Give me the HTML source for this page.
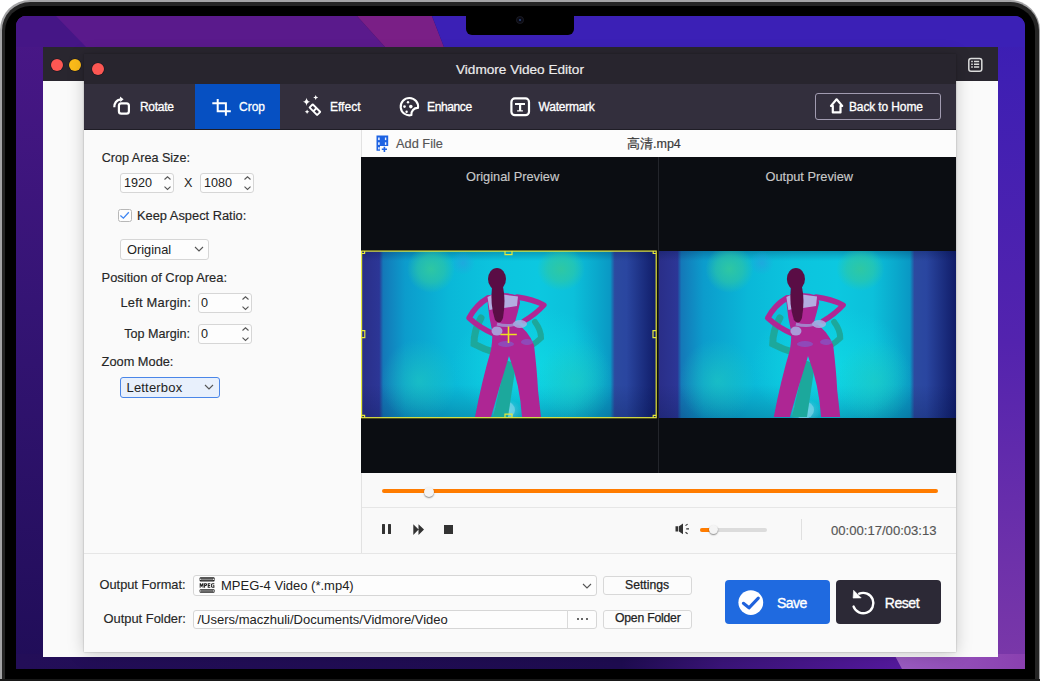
<!DOCTYPE html>
<html><head><meta charset="utf-8">
<style>
*{margin:0;padding:0;box-sizing:border-box}
html,body{width:1040px;height:681px;overflow:hidden;background:#fff;font-family:"Liberation Sans",sans-serif}
.a{position:absolute}
.t{position:absolute;white-space:nowrap;line-height:1}
svg{position:absolute;overflow:visible}
#frame{left:0;top:0;width:1040px;height:720px;border-radius:30px;background:#a4a4a6}
#ring{left:1.5px;top:1.5px;width:1037px;height:720px;border-radius:28.5px;background:#252525}
#bezel{left:5px;top:5.5px;width:1030px;height:720px;border-radius:25px;background:#000}
#screen{left:16px;top:16px;width:1009px;height:653px;border-radius:10px 10px 0 0;overflow:hidden}
#notch{left:466px;top:16px;width:108px;height:19px;background:#000;border-radius:0 0 6px 6px}
#mainwin{left:43px;top:47px;width:955px;height:610px;background:#fafafa}
#maintb{left:43px;top:47px;width:955px;height:34px;background:#29262f}
.dot{position:absolute;width:12px;height:12px;border-radius:50%}
#dialog{left:84px;top:54px;width:872px;height:598px;background:#fafafa;box-shadow:0 0 1.5px rgba(0,0,0,.3),0 2px 16px rgba(0,0,0,.2)}
.lbl{color:#262626;font-size:12.6px;-webkit-text-stroke:.15px #262626}
.spin{position:absolute;width:54px;height:20px;border:1px solid #d6d6d6;border-radius:3px;background:#fdfdfd}
.sel{position:absolute;border:1px solid #d6d6d6;border-radius:3px;background:#fdfdfd}
.btn{position:absolute;border:1px solid #d8d8d8;border-radius:3px;background:#fcfcfc}
</style></head><body>
<div class="a" id="frame"></div>
<div class="a" id="ring"></div>
<div class="a" id="bezel"></div>
<div class="a" id="screen">
<svg width="1009" height="653" viewBox="0 0 1009 653" style="left:0;top:0">
<defs>
<linearGradient id="gl" x1="0" y1="0" x2="0" y2="1"><stop offset="0" stop-color="#4a1788"/><stop offset=".45" stop-color="#341474"/><stop offset="1" stop-color="#200d58"/></linearGradient>
<linearGradient id="gr" x1="0" y1="0" x2="0" y2="1"><stop offset="0" stop-color="#3a1eb4"/><stop offset=".5" stop-color="#5323ae"/><stop offset="1" stop-color="#7b38a8"/></linearGradient>
<linearGradient id="gb" x1="0" y1="0" x2="1" y2="0"><stop offset="0" stop-color="#230e58"/><stop offset=".6" stop-color="#1e0c50"/><stop offset=".7" stop-color="#3a1478"/><stop offset=".86" stop-color="#52189a"/><stop offset="1" stop-color="#6a28a8"/></linearGradient>
<linearGradient id="gb2" x1="0" y1="0" x2="1" y2="0"><stop offset="0" stop-color="#9a5cc0"/><stop offset="1" stop-color="#8a40b0"/></linearGradient>
</defs>
<rect width="1009" height="653" fill="#2a1060"/>
<rect x="0" y="0" width="30" height="653" fill="url(#gl)"/>
<rect x="975" y="0" width="34" height="653" fill="url(#gr)"/>
<polygon points="0,0 341,0 369,31 0,31" fill="#5a1a8c"/>
<polygon points="0,0 40,0 70,31 0,31" fill="#451686"/>
<polygon points="341,0 416,0 428,31 369,31" fill="#7a1f86"/>
<polygon points="416,0 1009,0 1009,31 428,31" fill="#3b20b6"/>
<rect x="0" y="638" width="1009" height="15" fill="url(#gb)"/>
<polygon points="878,638 1009,638 1009,653 886,653" fill="url(#gb2)"/>
</svg>
</div>
<div class="a" id="notch"></div>
<div class="a" style="left:0;top:679px;width:1040px;height:2px;background:#181818"></div>
<div class="a" style="left:517px;top:17px;width:6px;height:6px;border-radius:50%;background:#0a0a14;box-shadow:0 0 0 .8px #1e1e26"></div><div class="a" style="left:519px;top:19px;width:2px;height:2px;border-radius:50%;background:#2a4a80"></div>
<div class="a" id="mainwin"></div>
<div class="a" id="maintb"></div>
<div class="dot" style="left:51px;top:59px;background:#fc5753;box-shadow:0 0 0 .6px #1a1820"></div>
<div class="dot" style="left:69px;top:59px;background:#fdbc19;box-shadow:0 0 0 .6px #1a1820"></div>
<svg width="24" height="24" style="left:963px;top:53px" viewBox="0 0 24 24"><rect x="5.8" y="5.5" width="13" height="12.8" rx="2.3" fill="none" stroke="#dcdcdc" stroke-width="1.5"/><g stroke="#dcdcdc" stroke-width="1.5"><path d="M8.2 8.5h1.6M11 8.5h5.2M8.2 11.3h1.6M11 11.3h5.2M8.2 14.1h1.6M11 14.1h5.2"/></g></svg>

<div class="a" id="dialog"></div>
<!-- dialog title bar -->
<div class="a" style="left:84px;top:54px;width:872px;height:30px;background:#28252e"></div>
<div class="dot" style="left:92px;top:63px;background:#fc5753;box-shadow:0 0 0 .6px #1a1820"></div>
<div class="t" style="left:456px;top:62.8px;font-size:13.6px;color:#ececec;-webkit-text-stroke:.2px #ececec">Vidmore Video Editor</div>
<!-- toolbar -->
<div class="a" style="left:84px;top:84px;width:872px;height:46px;background:#332f3d"></div>
<div class="a" style="left:194.5px;top:84px;width:85.5px;height:46px;background:#0650c2"></div><div class="a" style="left:84px;top:129px;width:872px;height:1.5px;background:#1f1d26"></div>
<!-- rotate icon -->
<svg width="28" height="28" style="left:108px;top:92px" viewBox="0 0 28 28"><rect x="10.9" y="11.4" width="10" height="10.3" rx="2.4" fill="none" stroke="#fff" stroke-width="2.2"/><path d="M6.3 15.2C6.3 10.8 8.8 8 12.6 7.3" fill="none" stroke="#fff" stroke-width="2.2"/><path d="M12 4.6L15.6 7.3L12.3 10.1Z" fill="#fff"/></svg>
<div class="t" style="left:140px;top:101px;font-size:12px;color:#fff;-webkit-text-stroke:.3px #fff;letter-spacing:-.3px">Rotate</div>
<!-- crop icon -->
<svg width="28" height="28" style="left:208px;top:92px" viewBox="0 0 28 28"><path d="M9.7 7V19.2H22.8M4.3 11.3H17.9V23.8" fill="none" stroke="#fff" stroke-width="2"/></svg>
<div class="t" style="left:239px;top:101px;font-size:12px;color:#fff;-webkit-text-stroke:.3px #fff">Crop</div>
<!-- effect icon -->
<svg width="28" height="28" style="left:298px;top:92px" viewBox="0 0 28 28">
<path d="M8.55 5.8Q9 9.4 12.3 9.87Q9 10.3 8.55 14Q8.1 10.3 4.8 9.87Q8.1 9.4 8.55 5.8Z" fill="#fff"/>
<path d="M17.7 3Q18 5.2 20.2 5.55Q18 5.9 17.7 8.1Q17.4 5.9 15.2 5.55Q17.4 5.2 17.7 3Z" fill="#fff"/>
<path d="M9.1 17.4Q9.4 19.4 11.4 19.7Q9.4 20 9.1 22Q8.8 20 6.8 19.7Q8.8 19.4 9.1 17.4Z" fill="#fff"/>
<g transform="translate(16.9 17.7) rotate(45)"><rect x="-6.3" y="-3.2" width="12.6" height="6.4" rx="1.2" fill="#fff"/><rect x="-4.4" y="-1.3" width="3.4" height="2.6" fill="#332f3d"/><rect x="1" y="-1.3" width="3.4" height="2.6" fill="#332f3d"/></g>
</svg>
<div class="t" style="left:330px;top:101px;font-size:12px;color:#fff;-webkit-text-stroke:.3px #fff">Effect</div>
<!-- enhance icon -->
<svg width="28" height="28" style="left:395px;top:92px" viewBox="0 0 28 28"><path d="M16.4 23.1A8.7 8.7 0 1 1 23 15.9A6.3 6.3 0 0 0 16.4 23.1Z" fill="none" stroke="#fff" stroke-width="2.1" stroke-linejoin="round"/><circle cx="13" cy="10.2" r="1.2" fill="#fff"/><circle cx="9.5" cy="14.6" r="1.3" fill="#fff"/><circle cx="15.8" cy="14.6" r="1.8" fill="#fff"/><circle cx="11.6" cy="19.8" r="1.2" fill="#fff"/></svg>
<div class="t" style="left:427px;top:101px;font-size:12px;color:#fff;-webkit-text-stroke:.3px #fff;letter-spacing:-.37px">Enhance</div>
<!-- watermark icon -->
<svg width="28" height="28" style="left:506px;top:92px" viewBox="0 0 28 28"><rect x="5.4" y="6.4" width="17.6" height="16.8" rx="3.5" fill="none" stroke="#fff" stroke-width="2.2"/><path d="M9 11h10v2H15.2v5.2h1.7v1.3h-5.8v-1.3h1.9V13H9Z" fill="#fff"/></svg>
<div class="t" style="left:538.6px;top:101px;font-size:12px;color:#fff;-webkit-text-stroke:.3px #fff;letter-spacing:-.25px">Watermark</div>
<!-- back to home -->
<div class="a" style="left:815px;top:93px;width:126px;height:27px;border:1.5px solid #a19bb0;border-radius:3px"></div>
<svg width="24" height="24" style="left:825px;top:94px" viewBox="0 0 24 24"><path d="M7.8 18.4V11.9H6L11.6 5.3L17.2 11.9H15.5V18.4Z" fill="none" stroke="#fff" stroke-width="2.2" stroke-linejoin="round"/></svg>
<div class="t" style="left:849px;top:100.5px;font-size:12px;color:#fff;-webkit-text-stroke:.3px #fff;letter-spacing:-.13px">Back to Home</div>

<!-- left panel -->
<div class="a" style="left:84px;top:130px;width:277px;height:423px;background:#fafafa"></div>
<div class="a" style="left:361px;top:130px;width:1px;height:423px;background:#e2e2e2"></div>
<div class="t lbl" style="left:101.7px;top:152px">Crop Area Size:</div>
<div class="spin" style="left:120px;top:173px"></div>
<div class="t" style="left:124px;top:177px;font-size:12.6px;color:#222">1920</div>
<svg width="10" height="16" style="left:162px;top:175px" viewBox="0 0 10 16"><path d="M2.5 4.5L5.5 1.8L8.5 4.5M2.5 11.7L5.5 14.4L8.5 11.7" fill="none" stroke="#555" stroke-width="1.1"/></svg>
<div class="t" style="left:184px;top:177px;font-size:12.6px;color:#222">X</div>
<div class="spin" style="left:200px;top:173px"></div>
<div class="t" style="left:204px;top:177px;font-size:12.6px;color:#222">1080</div>
<svg width="10" height="16" style="left:242px;top:175px" viewBox="0 0 10 16"><path d="M2.5 4.5L5.5 1.8L8.5 4.5M2.5 11.7L5.5 14.4L8.5 11.7" fill="none" stroke="#555" stroke-width="1.1"/></svg>
<div class="a" style="left:118px;top:209px;width:13.6px;height:13.4px;border:1.3px solid #b8b8b8;border-radius:2.5px;background:#fdfdfd"></div>
<svg width="14" height="14" style="left:118px;top:209px" viewBox="0 0 14 14"><path d="M2.4 6.6L5.4 9.2L10.8 3.3" fill="none" stroke="#3f86f2" stroke-width="1.3"/></svg>
<div class="t lbl" style="left:137px;top:210px;font-size:12.85px">Keep Aspect Ratio:</div>
<div class="sel" style="left:120px;top:239px;width:89px;height:21px"></div>
<div class="t" style="left:127px;top:243.5px;font-size:12.8px;color:#222">Original</div>
<svg width="10" height="8" style="left:194px;top:245px" viewBox="0 0 10 8"><path d="M1 2L5 6L9 2" fill="none" stroke="#555" stroke-width="1.1"/></svg>
<div class="t lbl" style="left:101.6px;top:272px;font-size:12.9px">Position of Crop Area:</div>
<div class="t lbl" style="left:120.5px;top:297px;font-size:12.9px;letter-spacing:.2px">Left Margin:</div>
<div class="spin" style="left:198px;top:293px"></div>
<div class="t" style="left:201px;top:297px;font-size:12.6px;color:#222">0</div>
<svg width="10" height="16" style="left:240px;top:295px" viewBox="0 0 10 16"><path d="M2.5 4.5L5.5 1.8L8.5 4.5M2.5 11.7L5.5 14.4L8.5 11.7" fill="none" stroke="#555" stroke-width="1.1"/></svg>
<div class="t lbl" style="left:124.2px;top:328px">Top Margin:</div>
<div class="spin" style="left:198px;top:324px"></div>
<div class="t" style="left:201px;top:328px;font-size:12.6px;color:#222">0</div>
<svg width="10" height="16" style="left:240px;top:326px" viewBox="0 0 10 16"><path d="M2.5 4.5L5.5 1.8L8.5 4.5M2.5 11.7L5.5 14.4L8.5 11.7" fill="none" stroke="#555" stroke-width="1.1"/></svg>
<div class="t lbl" style="left:101.6px;top:355.5px;font-size:12.8px">Zoom Mode:</div>
<div class="sel" style="left:120px;top:377px;width:100px;height:21px;border-color:#4a86e8;background:#e8f0fc"></div>
<div class="t" style="left:126.5px;top:381px;font-size:13px;color:#222;letter-spacing:.18px">Letterbox</div>
<svg width="10" height="8" style="left:204px;top:383px" viewBox="0 0 10 8"><path d="M1 2L5 6L9 2" fill="none" stroke="#555" stroke-width="1.1"/></svg>

<!-- preview header -->
<div class="a" style="left:362px;top:130px;width:594px;height:27px;background:#fcfcfc"></div>
<svg width="20" height="22" style="left:372px;top:132px" viewBox="0 0 20 22"><path d="M4.5 3.4H16.2V13.9H8V18.7H4.5Z" fill="#1d62e2"/><g fill="#e8f0ff"><rect x="6.1" y="5.5" width="1.6" height="2.6"/><rect x="6.1" y="10.3" width="1.6" height="2.6"/><rect x="6.1" y="15.2" width="1.6" height="2.2"/><rect x="12.9" y="5.5" width="1.4" height="2.6"/><rect x="12.9" y="10.3" width="1.4" height="2.6"/></g><path d="M12.4 14.7V19.9M9.8 17.3H15" stroke="#1d62e2" stroke-width="1.6"/></svg>
<div class="t" style="left:396px;top:137.5px;font-size:12.8px;color:#555;-webkit-text-stroke:.15px #555">Add File</div>
<div class="t" style="left:627px;top:137.5px;font-size:12.5px;color:#3a3a3a;-webkit-text-stroke:.2px #3a3a3a">高清.mp4</div>

<!-- preview area -->
<div class="a" style="left:361px;top:157px;width:595px;height:316px;background:#0b0d12"></div>
<div class="a" style="left:658px;top:157px;width:1px;height:316px;background:#23252b"></div>
<div class="t" style="left:466px;top:171px;font-size:12.8px;color:#c8c8c8;-webkit-text-stroke:.15px #c8c8c8">Original Preview</div>
<div class="t" style="left:765.5px;top:171px;font-size:12.8px;color:#c8c8c8;-webkit-text-stroke:.15px #c8c8c8">Output Preview</div>
<svg width="0" height="0" style="left:0;top:0">
<defs>
<linearGradient id="vbg" x1="0" y1="0" x2="1" y2="0">
<stop offset="0" stop-color="#2a2e88"/><stop offset=".062" stop-color="#2c3696"/><stop offset=".075" stop-color="#1478b8"/><stop offset=".15" stop-color="#0c9ccc"/><stop offset=".3" stop-color="#0ab8d8"/><stop offset=".45" stop-color="#0cc4de"/><stop offset=".6" stop-color="#0cc8e0"/><stop offset=".72" stop-color="#0cc0da"/><stop offset=".8" stop-color="#0aa8cc"/><stop offset=".845" stop-color="#0a98c4"/><stop offset=".86" stop-color="#2c4aa0"/><stop offset=".9" stop-color="#2a46a0"/><stop offset="1" stop-color="#101c68"/>
</linearGradient>
<linearGradient id="vvig" x1="0" y1="0" x2="0" y2="1"><stop offset="0" stop-color="#001040" stop-opacity=".25"/><stop offset=".06" stop-color="#001040" stop-opacity="0"/><stop offset=".8" stop-color="#001040" stop-opacity="0"/><stop offset="1" stop-color="#001040" stop-opacity=".22"/></linearGradient>
<radialGradient id="spotl"><stop offset="0" stop-color="#10dce4" stop-opacity=".7"/><stop offset="1" stop-color="#10dce4" stop-opacity="0"/></radialGradient>
<radialGradient id="spotg"><stop offset="0" stop-color="#30c8a0" stop-opacity=".95"/><stop offset=".55" stop-color="#30c8a0" stop-opacity=".6"/><stop offset="1" stop-color="#30c8a0" stop-opacity="0"/></radialGradient>
<radialGradient id="spotc"><stop offset="0" stop-color="#20ccc0" stop-opacity=".6"/><stop offset="1" stop-color="#20ccc0" stop-opacity="0"/></radialGradient>
<radialGradient id="spotb"><stop offset="0" stop-color="#2a9ee0" stop-opacity=".6"/><stop offset="1" stop-color="#2a9ee0" stop-opacity="0"/></radialGradient>
<radialGradient id="spotw"><stop offset="0" stop-color="#8ad8f0" stop-opacity=".6"/><stop offset="1" stop-color="#8ad8f0" stop-opacity="0"/></radialGradient>
<filter id="bl2" x="-10%" y="-10%" width="120%" height="120%"><feGaussianBlur stdDeviation=".6"/></filter>
<symbol id="video" viewBox="0 0 295 167" preserveAspectRatio="none">
<rect width="295" height="167" fill="url(#vbg)"/>
<rect width="295" height="167" fill="url(#vvig)"/>
<ellipse cx="170" cy="115" rx="80" ry="60" fill="url(#spotl)"/>
<ellipse cx="70" cy="18" rx="24" ry="24" fill="url(#spotg)"/>
<ellipse cx="200" cy="18" rx="24" ry="22" fill="url(#spotg)"/>
<ellipse cx="58" cy="130" rx="38" ry="42" fill="url(#spotc)"/>
<ellipse cx="215" cy="130" rx="38" ry="42" fill="url(#spotc)"/>
<ellipse cx="102" cy="12" rx="12" ry="12" fill="url(#spotb)"/>
<ellipse cx="145" cy="160" rx="16" ry="12" fill="url(#spotw)"/>
<g filter="url(#bl2)" transform="translate(-361 -251)">
<ellipse cx="505" cy="410" rx="10" ry="9" fill="#86d8ec" opacity=".6"/>
<path d="M481 318Q474 330 474 344Q485 350 497 353" fill="none" stroke="#1ea89c" stroke-width="7" stroke-linecap="round"/>
<path d="M535 322Q541 330 541 338Q537 342 532 345" fill="none" stroke="#1ea89c" stroke-width="6" stroke-linecap="round"/>
<path d="M506 360L516 364L508 417L493 417Z" fill="#1ea89c"/>
<path d="M488 298Q476 305 469 318Q480 328 494 334" fill="none" stroke="#b02894" stroke-width="5.6" stroke-linecap="round" stroke-linejoin="round"/>
<path d="M517 297Q532 299 544 305Q536 314 524 321" fill="none" stroke="#b02894" stroke-width="5.3" stroke-linecap="round" stroke-linejoin="round"/>
<path d="M487 296Q502 290 519 296L520 303Q518 312 515 322Q528 330 534 345Q537 370 538 390L541 417L522 417Q520 385 509 356Q500 385 491 417L475 417Q482 380 491 350Q493 338 492 330Q489 318 488 306Z" fill="#ae2694"/>
<path d="M487.5 297L493 294.5L494 309L489.5 310Z" fill="#b4bce8" opacity=".9"/><path d="M503 294.5L518 296.5L517 306L504 308Z" fill="#b4bce8" opacity=".9"/>
<ellipse cx="497" cy="331" rx="5.5" ry="4.5" fill="#a8b0e4" opacity=".85"/>
<ellipse cx="520" cy="324" rx="7" ry="4" fill="#a8b0e4" opacity=".85"/>
<path d="M497 324Q510 328 521 322" stroke="#a0a8e0" stroke-width="3" fill="none" opacity=".7"/>
<ellipse cx="497" cy="279" rx="9" ry="11" fill="#5a0e44"/>
<path d="M492 287Q490 305 495 320Q500 326 503 318Q506 300 503 287Z" fill="#5a0e44"/>
<ellipse cx="506" cy="344" rx="8" ry="3" fill="#7a62d2" opacity=".6"/>
<ellipse cx="527" cy="342" rx="6" ry="3" fill="#7a62d2" opacity=".6"/>
</g>
</symbol>
</defs>
</svg>
<svg width="295" height="167" style="left:361px;top:251px"><use href="#video" width="295" height="167"/></svg>
<svg width="297" height="167" style="left:659px;top:251px"><use href="#video" width="297" height="167"/></svg>
<!-- crop overlay -->
<svg width="298" height="170" style="left:361px;top:250px" viewBox="0 0 298 170">
<g fill="none" stroke="#e6e83a" stroke-width="1.2">
<rect x="0.6" y="1.1" width="294.6" height="166.6"/>
<path d="M0.6 3.5h3v-2.4M295.2 3.5h-3v-2.4M0.6 165.3h3v2.4M295.2 165.3h-3v2.4"/>
<path d="M144 1.1v3.5h7v-3.5M144 167.7v-3.5h7v3.5M0.6 80.7h3.2v7h-3.2M295.2 80.7h-3.2v7h3.2"/>
</g>
<path d="M147.5 76.5v16.5M139.4 84.5h16.4" stroke="#f0e020" stroke-width="1.6"/>
</svg>

<!-- timeline -->
<div class="a" style="left:362px;top:473px;width:594px;height:80px;background:#f9f9f9"></div>
<div class="a" style="left:382px;top:489.3px;width:556px;height:4px;border-radius:2px;background:#ff7c00"></div>
<div class="a" style="left:424px;top:486.5px;width:10px;height:10px;border-radius:50%;background:#f4f4f4;box-shadow:0 1px 1.5px rgba(0,0,0,.45)"></div>
<div class="a" style="left:362px;top:507px;width:594px;height:1px;background:#e6e6e6"></div>
<div class="a" style="left:84px;top:553px;width:872px;height:1px;background:#e6e6e6"></div>
<div class="a" style="left:382.3px;top:524.2px;width:2.6px;height:10px;background:#333;border-radius:.5px"></div>
<div class="a" style="left:388.3px;top:524.2px;width:2.6px;height:10px;background:#333;border-radius:.5px"></div>
<svg width="12" height="12" style="left:412.5px;top:524px" viewBox="0 0 12 12"><path d="M0.3 0.3L5.6 5.6L0.3 11ZM5.5 0.3L11 5.6L5.5 11Z" fill="#333"/></svg>
<div class="a" style="left:443.6px;top:525px;width:9.6px;height:9.2px;background:#333"></div>
<svg width="16" height="12" style="left:675px;top:523px" viewBox="0 0 16 12"><path d="M0.5 3.3H3.3V8.5H0.5Z M4 3.3L8 0.6V11.3L4 8.5Z" fill="#333"/><path d="M10.5 2.6L12.6 1.1M11.2 5.9H14M10.5 9.2L12.6 10.7" stroke="#333" stroke-width="1.1"/></svg>
<div class="a" style="left:700px;top:528px;width:67px;height:3.6px;border-radius:2px;background:#dcdcdc"></div>
<div class="a" style="left:700px;top:528px;width:12px;height:3.6px;border-radius:2px;background:#ff7c00"></div>
<div class="a" style="left:709px;top:525.3px;width:9px;height:9px;border-radius:50%;background:#f4f4f4;box-shadow:0 1px 1.5px rgba(0,0,0,.45)"></div>
<div class="a" style="left:801px;top:519px;width:1px;height:21px;background:#e0e0e0"></div>
<div class="t" style="left:831px;top:523.6px;font-size:13.1px;color:#555;-webkit-text-stroke:.15px #555">00:00:17/00:03:13</div>

<!-- bottom -->
<div class="t lbl" style="left:99.5px;top:578.5px;font-size:12.8px">Output Format:</div>
<div class="t lbl" style="left:103.5px;top:613px;font-size:12.9px">Output Folder:</div>
<div class="sel" style="left:193px;top:575px;width:404px;height:21px"></div>
<svg width="24" height="22" style="left:195px;top:574px" viewBox="0 0 24 22"><rect x="4.6" y="3.3" width="15" height="4.2" rx="1" fill="#222"/><rect x="6.3" y="4.5" width="11.6" height="1.8" fill="#888"/><rect x="4.6" y="15.2" width="15" height="3.5" rx="1" fill="#222"/><rect x="6.3" y="16.2" width="11.6" height="1.5" fill="#888"/><g fill="#1e1e1e"><path d="M4.7 13.7V9.3H5.9L6.6 11L7.3 9.3H8.5V13.7H7.6V11.2L6.9 12.7H6.3L5.6 11.2V13.7Z"/><path d="M9.1 13.7V9.3H10.9Q12.1 9.3 12.1 10.6Q12.1 11.9 10.9 11.9H10.1V13.7ZM10.1 10.2V11H10.8Q11.1 11 11.1 10.6Q11.1 10.2 10.8 10.2Z"/><path d="M12.7 13.7V9.3H15.3V10.2H13.7V11H15V11.9H13.7V12.8H15.3V13.7Z"/><path d="M19.4 11.3V13.7H17.6Q15.8 13.7 15.8 11.5Q15.8 9.3 17.6 9.3H19.3V10.2H17.7Q16.8 10.2 16.8 11.5Q16.8 12.8 17.7 12.8H18.4V12.1H17.8V11.3Z"/></g><g fill="#fff"><rect x="5.2" y="4.6" width="1" height="1.4"/><rect x="18.1" y="4.6" width="1" height="1.4"/><rect x="5.2" y="16.3" width="1" height="1.3"/><rect x="18.1" y="16.3" width="1" height="1.3"/></g></svg>
<div class="t" style="left:221px;top:578.5px;font-size:13px;color:#222">MPEG-4 Video (*.mp4)</div>
<svg width="10" height="8" style="left:582px;top:581.5px" viewBox="0 0 10 8"><path d="M1 2L5 6L9 2" fill="none" stroke="#555" stroke-width="1.1"/></svg>
<div class="sel" style="left:193px;top:609.5px;width:404px;height:19px"></div>
<div class="a" style="left:567px;top:610px;width:1px;height:18px;background:#dadada"></div>
<div class="t" style="left:197.5px;top:612.5px;font-size:13px;color:#222">/Users/maczhuli/Documents/Vidmore/Video</div>
<div class="a" style="left:576.5px;top:618px;width:2px;height:2px;background:#333;border-radius:1px"></div>
<div class="a" style="left:581.3px;top:618px;width:2px;height:2px;background:#333;border-radius:1px"></div>
<div class="a" style="left:586px;top:618px;width:2px;height:2px;background:#333;border-radius:1px"></div>
<div class="btn" style="left:603px;top:576px;width:89px;height:19px"></div>
<div class="t" style="left:625px;top:579px;font-size:12.2px;color:#222;-webkit-text-stroke:.25px #222">Settings</div>
<div class="btn" style="left:603px;top:609.5px;width:89px;height:19px"></div>
<div class="t" style="left:615px;top:612.2px;font-size:12.2px;color:#222;-webkit-text-stroke:.25px #222;letter-spacing:-.2px">Open Folder</div>

<div class="a" style="left:725px;top:580px;width:105px;height:44px;border-radius:4px;background:#1f6ae0"></div>
<svg width="26" height="26" style="left:738px;top:590px" viewBox="0 0 26 26"><circle cx="12.8" cy="12.6" r="12.4" fill="#fff"/><path d="M5.4 13.3L11 17.8L20.3 8.2" fill="none" stroke="#1f62dc" stroke-width="3.1" stroke-linecap="round" stroke-linejoin="round"/></svg>
<div class="t" style="left:777px;top:596px;font-size:14px;color:#fff;-webkit-text-stroke:.35px #fff;letter-spacing:-.55px">Save</div>
<div class="a" style="left:836px;top:580px;width:105px;height:44px;border-radius:4px;background:#2c2936"></div>
<svg width="34" height="34" style="left:846px;top:586px" viewBox="0 0 34 34"><path d="M7.6 20.6A10.2 10.2 0 1 0 13.2 7.7" fill="none" stroke="#fff" stroke-width="2.4" stroke-linecap="round"/><path d="M7.6 4.3L7.1 12.1L15.2 11.9Z" fill="#fff" stroke="#fff" stroke-width=".6" stroke-linejoin="round"/></svg>
<div class="t" style="left:884.8px;top:596px;font-size:14px;color:#fff;-webkit-text-stroke:.35px #fff;letter-spacing:-.45px">Reset</div>
</body></html>
